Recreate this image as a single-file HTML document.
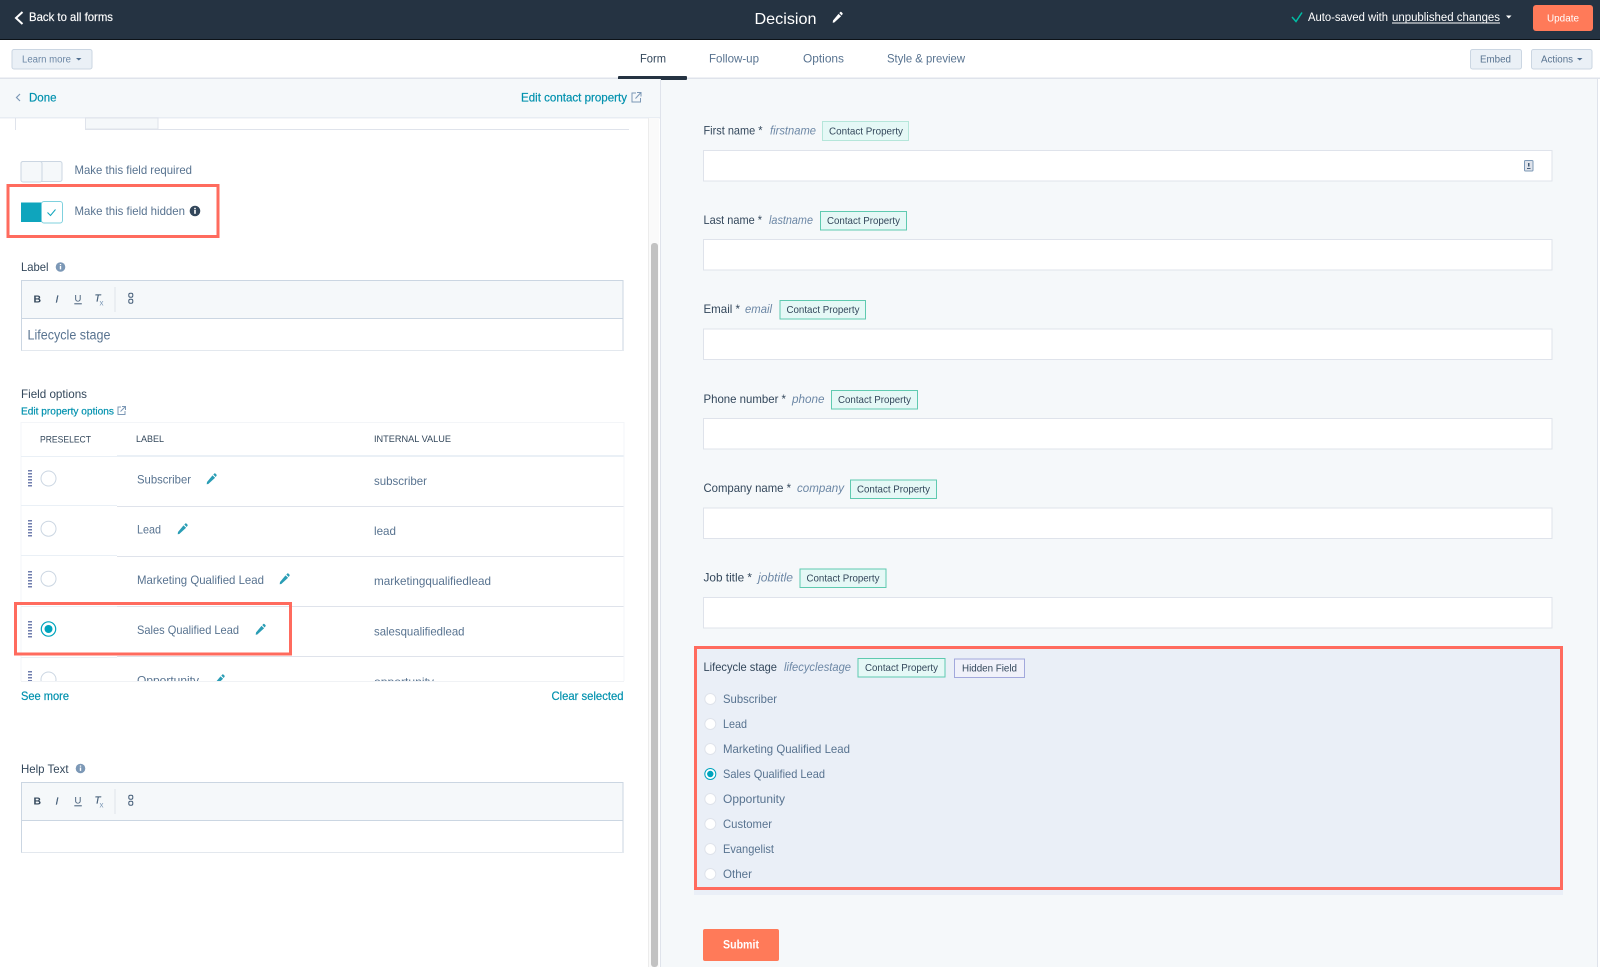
<!DOCTYPE html>
<html lang="en"><head><meta charset="utf-8"><title>Decision</title>
<style>
html,body{margin:0;padding:0;width:1600px;height:967px;overflow:hidden;background:#fff}
svg{display:block;filter:blur(.35px)}
text{font-family:"Liberation Sans",sans-serif;font-size:12px;fill:#587390}
.w{fill:#fff}.t{fill:#0091ae;stroke:#0091ae;stroke-width:.2}.d{fill:#33475b}.i{font-style:italic;fill:#6c87a5}.b{font-weight:bold}
.tag{fill:#e5f8f6;stroke:#5fcab0;stroke-width:1}
.btn{fill:#eaf0f6;stroke:#cbd6e2;stroke-width:1}
.inp{fill:#fff;stroke:#dfe3eb;stroke-width:1}
.red{fill:none;stroke:#ff6b5e;stroke-width:3}
.rad{fill:#fff;stroke:#cbd6e2;stroke-width:1}
.tagt{font-size:10.5px;fill:#33475b}
.pen{fill:#2a9db5}
.drag{stroke:#33478b;stroke-width:1.4;stroke-dasharray:1.5 1.5;fill:none}
</style></head><body>
<svg width="1600" height="967" viewBox="0 0 1600 967" xmlns="http://www.w3.org/2000/svg">
<defs>
<path id="pencil" d="M-3.2 5 L-4.8 5.2 L-4.5 3 L1 -3.6 L3.6 -1.2 Z M1.8 -4.4 L2.8 -5.5 Q3.3 -6 3.9 -5.5 L5 -4.4 Q5.5 -3.8 5 -3.3 L4.2 -2 Z"/>
</defs>
<rect width="1600" height="967" fill="#fff"/>

<!-- preview bg -->
<rect x="661" y="79" width="936" height="888" fill="#f5f8fa"/>
<rect x="1597" y="79" width="1" height="888" fill="#dfe3eb"/>

<!-- header -->
<rect width="1600" height="39" fill="#253342"/>
<rect y="39" width="1600" height="1" fill="#0c1218"/>
<path d="M22.5 12 L16 18 L22.5 24" fill="none" stroke="#fff" stroke-width="2"/>
<text class="w" x="29" y="21" textLength="84" lengthAdjust="spacingAndGlyphs" style="stroke:#fff;stroke-width:.15">Back to all forms</text>
<text class="w" x="754.5" y="24" style="font-size:16px" textLength="62" lengthAdjust="spacingAndGlyphs">Decision</text>
<use href="#pencil" transform="translate(837.5,17.5)" fill="#fff"/>
<path d="M1292 17 L1296 21.5 L1302 12.5" fill="none" stroke="#00bda5" stroke-width="1.5"/>
<text class="w" x="1308" y="21" style="font-size:11.5px" textLength="80" lengthAdjust="spacingAndGlyphs">Auto-saved with</text>
<text class="w" x="1392" y="21" style="font-size:11.5px" textLength="108" lengthAdjust="spacingAndGlyphs">unpublished changes</text>
<rect x="1392" y="22.5" width="108" height="1" fill="#fff"/>
<path d="M1506 15.5 H1511.5 L1508.75 18.5 Z" fill="#fff"/>
<rect x="1533" y="5" width="60" height="26" rx="3" fill="#ff7a59"/>
<text class="w" x="1547" y="21.5" style="font-size:10.5px" textLength="32" lengthAdjust="spacingAndGlyphs">Update</text>

<!-- nav -->
<rect x="0" y="40" width="1600" height="38" fill="#fff"/>
<rect x="0" y="77.5" width="1600" height="1.5" fill="#dfe3eb"/>
<rect x="12" y="49.5" width="80" height="19.5" rx="2" class="btn"/>
<text x="22" y="62.5" style="font-size:10px;fill:#6c87a5" textLength="49" lengthAdjust="spacingAndGlyphs">Learn more</text>
<path d="M76 58 H81.5 L78.75 60.5 Z" fill="#516f90"/>
<text class="d" x="640" y="62.5" textLength="26" lengthAdjust="spacingAndGlyphs">Form</text>
<text x="709" y="62.5" textLength="50" lengthAdjust="spacingAndGlyphs">Follow-up</text>
<text x="803" y="62.5" textLength="41" lengthAdjust="spacingAndGlyphs">Options</text>
<text x="887" y="62.5" textLength="78" lengthAdjust="spacingAndGlyphs">Style &amp; preview</text>
<rect x="618" y="76" width="69" height="4" rx="1" fill="#253342"/>
<rect x="1470.5" y="49.5" width="51" height="19.5" rx="2" class="btn"/>
<text x="1480" y="62.5" style="font-size:10px" textLength="31" lengthAdjust="spacingAndGlyphs">Embed</text>
<rect x="1531.5" y="49.5" width="60.5" height="19.5" rx="2" class="btn"/>
<text x="1541" y="62.5" style="font-size:10px" textLength="32" lengthAdjust="spacingAndGlyphs">Actions</text>
<path d="M1577 58 H1582.5 L1579.75 60.5 Z" fill="#516f90"/>

<!-- left panel -->
<rect x="0" y="79" width="660" height="38.5" fill="#f5f8fa"/>
<rect x="0" y="117" width="660" height="1.5" fill="#e8edf3"/>
<rect x="660" y="79" width="1" height="888" fill="#dfe3eb"/>
<path d="M20 94 L16.5 97.5 L20 101" fill="none" stroke="#7c98b6" stroke-width="1.2"/>
<text class="t" x="29" y="101.5" textLength="27.5" lengthAdjust="spacingAndGlyphs">Done</text>
<text class="t" x="521" y="101.5" textLength="106" lengthAdjust="spacingAndGlyphs">Edit contact property</text>
<g fill="none" stroke="#7c98b6" stroke-width="1"><path d="M636 93 H632 V102 H640.5 V98"/><path d="M635.5 98.5 L640.5 93 M637 92.5 H641 V96.5"/></g>

<!-- scrollbar -->
<rect x="648" y="118" width="11" height="849" fill="#fafafa"/>
<rect x="648" y="118" width="1" height="849" fill="#ececec"/>
<rect x="651" y="243" width="7" height="724" rx="3" fill="#c2c2c2"/>

<!-- tab remnants -->
<rect x="15" y="118" width="1" height="12" fill="#dfe3eb"/>
<rect x="85.5" y="118" width="72.5" height="11" fill="#f5f8fa" stroke="#dfe3eb" stroke-width="1"/>
<rect x="85" y="129" width="544" height="1" fill="#dfe3eb"/>

<!-- toggles -->
<rect x="21" y="161.5" width="41" height="20" rx="2" fill="#f5f8fa" stroke="#cbd6e2"/>
<rect x="21" y="161.5" width="21" height="20.5" rx="2" fill="#f5f8fa" stroke="#cbd6e2"/>
<text x="74.5" y="174" textLength="117.5" lengthAdjust="spacingAndGlyphs">Make this field required</text>
<rect x="21" y="202.5" width="22" height="19.5" fill="#0fa5bd"/>
<rect x="41.5" y="201.5" width="21" height="21.5" rx="2.5" fill="#fff" stroke="#7fd1de" stroke-width="1"/>
<path d="M47.5 212.5 L50.5 215.5 L55.5 209.5" fill="none" stroke="#0fa5bd" stroke-width="1"/>
<text x="74.5" y="215" textLength="110.5" lengthAdjust="spacingAndGlyphs">Make this field hidden</text>
<circle cx="195" cy="211" r="5.3" fill="#33475b"/><rect x="194.2" y="210" width="1.6" height="3.8" fill="#fff"/><rect x="194.2" y="207.8" width="1.6" height="1.5" fill="#fff"/>
<rect x="8" y="185.5" width="210" height="51" class="red"/>

<!-- label editor -->
<text class="d" x="21" y="271" textLength="27.5" lengthAdjust="spacingAndGlyphs">Label</text>
<circle cx="60.5" cy="267" r="4.8" fill="#7c98b6"/><rect x="59.8" y="266" width="1.4" height="3.4" fill="#fff"/><rect x="59.8" y="264" width="1.4" height="1.2" fill="#fff"/>
<g>
<rect x="21.5" y="280.5" width="601.5" height="70" fill="#fff" stroke="#cbd6e2"/>
<rect x="21.5" y="350" width="601.5" height="1" fill="#e3e8ee"/>
<rect x="22" y="281" width="600.5" height="37" fill="#f5f8fa"/>
<rect x="21.5" y="318" width="601.5" height="1" fill="#cbd6e2"/>
<text class="d b" x="33.5" y="302.5" style="font-size:10.5px">B</text>
<text class="i" x="55.5" y="302.5" style="font-size:10.5px;fill:#425b76;stroke:#425b76;stroke-width:.2">I</text>
<text x="74.5" y="301.5" style="font-size:9.5px;fill:#425b76">U</text><rect x="74.3" y="303.3" width="7.5" height="1" fill="#425b76"/>
<text class="i" x="94.5" y="301.5" style="font-size:10px;fill:#425b76;stroke:#425b76;stroke-width:.2">T</text><text x="99.5" y="305.5" style="font-size:8px;fill:#7c98b6">x</text>
<rect x="114.5" y="287" width="1" height="25" fill="#dfe3eb"/>
<g fill="none" stroke="#425b76" stroke-width="1"><rect x="128.8" y="293.3" width="4" height="4" rx="1.5"/><rect x="128.8" y="299.3" width="4" height="4" rx="1.5"/></g>
</g>
<text x="27.5" y="339.5" style="font-size:13.5px" textLength="83" lengthAdjust="spacingAndGlyphs">Lifecycle stage</text>

<!-- field options -->
<text class="d" x="21" y="398" textLength="66" lengthAdjust="spacingAndGlyphs">Field options</text>
<text class="t" x="21" y="414.5" style="font-size:10.5px" textLength="93" lengthAdjust="spacingAndGlyphs">Edit property options</text>
<g fill="none" stroke="#7c98b6" stroke-width="1"><path d="M121 407 H118 V414.5 H125 V411"/><path d="M120.5 411.5 L125 407 M122 406.5 H125.5 V410"/></g>

<rect x="21" y="422" width="602.5" height="259" fill="#fff"/>
<rect x="21" y="681" width="603" height="1" fill="#f0f2f5"/>
<rect x="623.5" y="422" width="1" height="259" fill="#f3f5f8"/>
<rect x="21" y="422" width="603" height="1" fill="#f3f5f8"/>
<rect x="20.5" y="422" width="1" height="259" fill="#f3f5f8"/>
<text class="d" x="40" y="442.5" style="font-size:9.5px" textLength="51" lengthAdjust="spacingAndGlyphs">PRESELECT</text>
<text class="d" x="136" y="442" style="font-size:9.5px" textLength="28" lengthAdjust="spacingAndGlyphs">LABEL</text>
<text class="d" x="374" y="442" style="font-size:9.5px" textLength="77" lengthAdjust="spacingAndGlyphs">INTERNAL VALUE</text>
<rect x="117" y="455" width="506.5" height="2" fill="#eaf0f6"/>
<rect x="21" y="456" width="96" height="1" fill="#eaf0f6"/>
<rect x="117" y="506" width="506.5" height="1" fill="#dfe3eb"/><rect x="21" y="505" width="96" height="1" fill="#eaf0f6"/>
<rect x="117" y="556" width="506.5" height="1" fill="#dfe3eb"/><rect x="21" y="555" width="96" height="1" fill="#eaf0f6"/>
<rect x="117" y="606" width="506.5" height="1" fill="#dfe3eb"/><rect x="21" y="606" width="96" height="1" fill="#eaf0f6"/>
<rect x="117" y="656" width="506.5" height="1" fill="#dfe3eb"/><rect x="21" y="657" width="96" height="1" fill="#eaf0f6"/>

<!-- rows -->
<g class="drag"><path d="M29 470 V487 M31 470 V487"/><path d="M29 520 V537 M31 520 V537"/><path d="M29 571 V588 M31 571 V588"/><path d="M29 621 V638 M31 621 V638"/></g>
<circle cx="48.5" cy="478.5" r="7.5" class="rad"/>
<circle cx="48.5" cy="528.7" r="7.5" class="rad"/>
<circle cx="48.5" cy="578.7" r="7.5" class="rad"/>
<circle cx="48.5" cy="629" r="7.2" fill="#fff" stroke="#00a4bd" stroke-width="1.2"/><circle cx="48.5" cy="629" r="4" fill="#00a4bd"/>

<text x="137" y="483.5" textLength="54" lengthAdjust="spacingAndGlyphs">Subscriber</text>
<text x="137" y="533.5" textLength="24" lengthAdjust="spacingAndGlyphs">Lead</text>
<text x="137" y="584" textLength="127" lengthAdjust="spacingAndGlyphs">Marketing Qualified Lead</text>
<text x="137" y="634" textLength="102" lengthAdjust="spacingAndGlyphs">Sales Qualified Lead</text>
<text x="374" y="485" textLength="53" lengthAdjust="spacingAndGlyphs">subscriber</text>
<text x="374" y="535" textLength="22" lengthAdjust="spacingAndGlyphs">lead</text>
<text x="374" y="585" textLength="117" lengthAdjust="spacingAndGlyphs">marketingqualifiedlead</text>
<text x="374" y="635.5" textLength="90.5" lengthAdjust="spacingAndGlyphs">salesqualifiedlead</text>
<g class="pen">
<use href="#pencil" transform="translate(211.5,479)"/>
<use href="#pencil" transform="translate(182.5,529)"/>
<use href="#pencil" transform="translate(284.5,579)"/>
<use href="#pencil" transform="translate(260.5,629.5)"/>
</g>
<clipPath id="cp"><rect x="21" y="657" width="603" height="24"/></clipPath>
<g clip-path="url(#cp)">
<path class="drag" d="M29 671 V688 M31 671 V688"/>
<circle cx="48.5" cy="679.5" r="7.5" class="rad"/>
<text x="137" y="684.5" textLength="62" lengthAdjust="spacingAndGlyphs">Opportunity</text>
<text x="374" y="686" textLength="60" lengthAdjust="spacingAndGlyphs">opportunity</text>
<use class="pen" href="#pencil" transform="translate(219.5,680)"/>
</g>
<rect x="15.5" y="603.5" width="275" height="50.5" class="red"/>
<text class="t" x="21" y="700" textLength="48" lengthAdjust="spacingAndGlyphs">See more</text>
<text class="t" x="551.5" y="700" textLength="72" lengthAdjust="spacingAndGlyphs">Clear selected</text>

<!-- help text -->
<text class="d" x="21" y="773" textLength="47.5" lengthAdjust="spacingAndGlyphs">Help Text</text>
<circle cx="80.5" cy="768.5" r="4.8" fill="#7c98b6"/><rect x="79.8" y="767.5" width="1.4" height="3.4" fill="#fff"/><rect x="79.8" y="765.5" width="1.4" height="1.2" fill="#fff"/>
<g transform="translate(0,502)">
<rect x="21.5" y="280.5" width="601.5" height="70" fill="#fff" stroke="#cbd6e2"/>
<rect x="21.5" y="350" width="601.5" height="1" fill="#e3e8ee"/>
<rect x="22" y="281" width="600.5" height="37" fill="#f5f8fa"/>
<rect x="21.5" y="318" width="601.5" height="1" fill="#cbd6e2"/>
<text class="d b" x="33.5" y="302.5" style="font-size:10.5px">B</text>
<text class="i" x="55.5" y="302.5" style="font-size:10.5px;fill:#425b76;stroke:#425b76;stroke-width:.2">I</text>
<text x="74.5" y="301.5" style="font-size:9.5px;fill:#425b76">U</text><rect x="74.3" y="303.3" width="7.5" height="1" fill="#425b76"/>
<text class="i" x="94.5" y="301.5" style="font-size:10px;fill:#425b76;stroke:#425b76;stroke-width:.2">T</text><text x="99.5" y="305.5" style="font-size:8px;fill:#7c98b6">x</text>
<rect x="114.5" y="287" width="1" height="25" fill="#dfe3eb"/>
<g fill="none" stroke="#425b76" stroke-width="1"><rect x="128.8" y="293.3" width="4" height="4" rx="1.5"/><rect x="128.8" y="299.3" width="4" height="4" rx="1.5"/></g>
</g>

<!-- form fields -->
<text class="d" x="703.5" y="134.5" textLength="59" lengthAdjust="spacingAndGlyphs">First name *</text>
<text class="i" x="770" y="134.5" textLength="46" lengthAdjust="spacingAndGlyphs">firstname</text>
<rect x="822.5" y="121.5" width="86" height="19" class="tag" style="stroke:#b5e6da"/>
<text class="tagt" x="829" y="134.5" textLength="74" lengthAdjust="spacingAndGlyphs">Contact Property</text>
<rect x="703.5" y="150.5" width="848.5" height="30.5" class="inp"/>
<rect x="1524.5" y="160.5" width="8.5" height="10.5" rx="1" fill="#dfe3eb" stroke="#7c98b6"/>
<rect x="1528" y="163" width="1.5" height="3.5" fill="#425b76"/><rect x="1527" y="168" width="3.5" height="1" fill="#425b76"/>

<text class="d" x="703.5" y="224" textLength="58.5" lengthAdjust="spacingAndGlyphs">Last name *</text>
<text class="i" x="769" y="224" textLength="44" lengthAdjust="spacingAndGlyphs">lastname</text>
<rect x="820.5" y="211.5" width="86" height="18.5" class="tag"/>
<text class="tagt" x="827" y="224" textLength="73" lengthAdjust="spacingAndGlyphs">Contact Property</text>
<rect x="703.5" y="239.5" width="848.5" height="30.5" class="inp"/>

<text class="d" x="703.5" y="313" textLength="36.5" lengthAdjust="spacingAndGlyphs">Email *</text>
<text class="i" x="745" y="313" textLength="27" lengthAdjust="spacingAndGlyphs">email</text>
<rect x="780" y="300.5" width="85.5" height="18.5" class="tag"/>
<text class="tagt" x="786.5" y="313" textLength="73" lengthAdjust="spacingAndGlyphs">Contact Property</text>
<rect x="703.5" y="329" width="848.5" height="30.5" class="inp"/>

<text class="d" x="703.5" y="403" textLength="82.5" lengthAdjust="spacingAndGlyphs">Phone number *</text>
<text class="i" x="792" y="403" textLength="32.5" lengthAdjust="spacingAndGlyphs">phone</text>
<rect x="831.5" y="390.5" width="86" height="18.5" class="tag"/>
<text class="tagt" x="838" y="403" textLength="73" lengthAdjust="spacingAndGlyphs">Contact Property</text>
<rect x="703.5" y="418.5" width="848.5" height="30.5" class="inp"/>

<text class="d" x="703.5" y="492" textLength="87.5" lengthAdjust="spacingAndGlyphs">Company name *</text>
<text class="i" x="797" y="492" textLength="47" lengthAdjust="spacingAndGlyphs">company</text>
<rect x="850.5" y="480" width="86" height="18.5" class="tag"/>
<text class="tagt" x="857" y="492.5" textLength="73" lengthAdjust="spacingAndGlyphs">Contact Property</text>
<rect x="703.5" y="508" width="848.5" height="30.5" class="inp"/>

<text class="d" x="703.5" y="581.5" textLength="48.5" lengthAdjust="spacingAndGlyphs">Job title *</text>
<text class="i" x="758" y="581.5" textLength="35" lengthAdjust="spacingAndGlyphs">jobtitle</text>
<rect x="800" y="569" width="86" height="18.5" class="tag"/>
<text class="tagt" x="806.5" y="581.5" textLength="73" lengthAdjust="spacingAndGlyphs">Contact Property</text>
<rect x="703.5" y="597.5" width="848.5" height="30.5" class="inp"/>

<!-- lifecycle -->
<rect x="694" y="889" width="869" height="6" fill="#eaeff7"/>
<rect x="695.5" y="647.5" width="866" height="241" fill="#eaeff7"/>
<rect x="695.5" y="647.5" width="866" height="241" class="red"/>
<text class="d" x="703.5" y="671" textLength="73.5" lengthAdjust="spacingAndGlyphs">Lifecycle stage</text>
<text class="i" x="784" y="671" textLength="67" lengthAdjust="spacingAndGlyphs">lifecyclestage</text>
<rect x="858" y="658.5" width="87" height="18.5" class="tag"/>
<text class="tagt" x="865" y="671" textLength="73" lengthAdjust="spacingAndGlyphs">Contact Property</text>
<rect x="954.5" y="659" width="70" height="18.5" fill="#f0f1fa" stroke="#a2a8dc"/>
<text class="tagt" x="962" y="671.5" textLength="55" lengthAdjust="spacingAndGlyphs">Hidden Field</text>

<circle cx="710.3" cy="699" r="5.5" class="rad" style="stroke:#dfe3eb"/>
<circle cx="710.3" cy="724" r="5.5" class="rad" style="stroke:#dfe3eb"/>
<circle cx="710.3" cy="749" r="5.5" class="rad" style="stroke:#dfe3eb"/>
<circle cx="710.3" cy="774" r="5.5" fill="#fff" stroke="#00a4bd"/><circle cx="710.3" cy="774" r="3.2" fill="#00a4bd"/>
<circle cx="710.3" cy="799" r="5.5" class="rad" style="stroke:#dfe3eb"/>
<circle cx="710.3" cy="824" r="5.5" class="rad" style="stroke:#dfe3eb"/>
<circle cx="710.3" cy="849" r="5.5" class="rad" style="stroke:#dfe3eb"/>
<circle cx="710.3" cy="874" r="5.5" class="rad" style="stroke:#dfe3eb"/>
<text x="723" y="703" textLength="54" lengthAdjust="spacingAndGlyphs">Subscriber</text>
<text x="723" y="728" textLength="24" lengthAdjust="spacingAndGlyphs">Lead</text>
<text x="723" y="753" textLength="127" lengthAdjust="spacingAndGlyphs">Marketing Qualified Lead</text>
<text x="723" y="778" textLength="102" lengthAdjust="spacingAndGlyphs">Sales Qualified Lead</text>
<text x="723" y="803" textLength="62" lengthAdjust="spacingAndGlyphs">Opportunity</text>
<text x="723" y="828" textLength="49" lengthAdjust="spacingAndGlyphs">Customer</text>
<text x="723" y="853" textLength="51" lengthAdjust="spacingAndGlyphs">Evangelist</text>
<text x="723" y="878" textLength="29" lengthAdjust="spacingAndGlyphs">Other</text>

<rect x="703" y="929" width="76" height="32" rx="2" fill="#ff7a59"/>
<text class="w b" x="723" y="948.5" textLength="36" lengthAdjust="spacingAndGlyphs">Submit</text>
</svg>
</body></html>
